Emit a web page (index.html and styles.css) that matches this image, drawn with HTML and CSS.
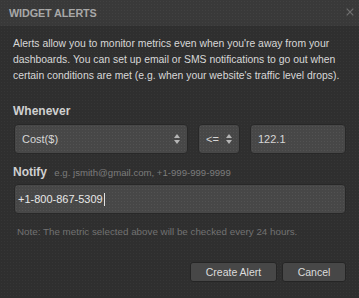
FILE: index.html
```html
<!DOCTYPE html>
<html>
<head>
<meta charset="utf-8">
<link rel="stylesheet" href="styles.css">
</head>
<body>
<div class="dialog">
  <div class="header">
    <span class="title">WIDGET ALERTS</span>
    <span class="close">
      <svg width="8" height="8" viewBox="0 0 8 8"><path d="M0.7 0.7L7.3 7.3M7.3 0.7L0.7 7.3" stroke="#6f6f6f" stroke-width="1.2"/></svg>
    </span>
  </div>
  <div class="body">
    <p class="intro">Alerts allow you to monitor metrics even when you're away from your dashboards. You can set up email or SMS notifications to go out when certain conditions are met (e.g. when your website's traffic level drops).</p>
    <div class="label">Whenever</div>
    <div class="row">
      <div class="field select metric"><span>Cost($)</span><span class="arrows"><svg width="6" height="10" viewBox="0 0 6 10"><path d="M3 0L6 4H0Z M3 10L6 6H0Z" fill="#b5b5b5"/></svg></span></div>
      <div class="field select op"><span>&lt;=</span><span class="arrows"><svg width="6" height="10" viewBox="0 0 6 10"><path d="M3 0L6 4H0Z M3 10L6 6H0Z" fill="#b5b5b5"/></svg></span></div>
      <div class="field value">122.1</div>
    </div>
    <div class="label notify">Notify <span class="hint">e.g. jsmith@gmail.com, +1-999-999-9999</span></div>
    <div class="field phone">+1-800-867-5309<span class="caret"></span></div>
    <div class="note">Note: The metric selected above will be checked every 24 hours.</div>
    <div class="actions">
      <button class="btn create">Create Alert</button>
      <button class="btn cancel">Cancel</button>
    </div>
  </div>
</div>
</body>
</html>
```
FILE: styles.css
```css
html, body {
  margin: 0;
  padding: 0;
  background: #2f2f2f;
}
body {
  font-family: "Liberation Sans", Arial, sans-serif;
  width: 359px;
  height: 298px;
  overflow: hidden;
}
.dialog {
  width: 359px;
  height: 298px;
  background-color: #2f2f2f;
  background-image: radial-gradient(circle, rgba(255,255,255,0.035) 0.6px, transparent 0.9px);
  background-size: 3px 3px;
}
.header {
  height: 26px;
  background-color: #393939;
  background-image: radial-gradient(circle, rgba(255,255,255,0.04) 0.6px, transparent 0.9px);
  background-size: 3px 3px;
  display: flex;
  align-items: center;
  justify-content: space-between;
  padding: 0 5px 0 9px;
}
.title {
  color: #a8a8a8;
  font-weight: bold;
  font-size: 10.8px;
  letter-spacing: -0.1px;
}
.close {
  display: flex;
  align-items: center;
  margin-top: -3px;
}
.body {
  padding: 0 13px 0 14px;
}
.intro {
  margin: 10px 0 0 -1px;
  color: #d8d8d8;
  font-size: 10.4px;
  line-height: 16px;
}
.label {
  color: #d0d0d0;
  font-weight: bold;
  font-size: 12px;
  margin-top: 20px;
  height: 15px;
  margin-left: -1px;
}
.row {
  display: flex;
  gap: 10px;
  margin-top: 5px;
}
.field {
  box-sizing: border-box;
  height: 30px;
  border-radius: 4px;
  border: 1px solid #282828;
  background-color: #474747;
  background-image: radial-gradient(circle, rgba(255,255,255,0.06) 0.6px, transparent 0.9px);
  background-size: 3px 3px;
  color: #d6d6d6;
  font-size: 11px;
  display: flex;
  align-items: center;
  padding: 0 7px;
}
.select {
  justify-content: space-between;
}
.arrows {
  display: flex;
  align-items: center;
}
.metric { width: 174px; }
.op { width: 42px; }
.value { flex: 1; }
.notify {
  margin-top: 11px;
}
.hint {
  font-weight: normal;
  color: #7c7c7c;
  font-size: 9.6px;
  margin-left: 4px;
}
.phone {
  margin-top: 4px;
  color: #e8e8e8;
  padding-left: 3px;
}
.caret {
  display: inline-block;
  width: 1px;
  height: 13px;
  background: #e0e0e0;
  margin-left: 1px;
}
.note {
  margin-top: 12px;
  color: #727272;
  font-size: 9.8px;
  margin-left: 3px;
}
.actions {
  display: flex;
  justify-content: flex-end;
  gap: 5px;
  margin-top: 25px;
}
.btn {
  box-sizing: border-box;
  height: 20px;
  border-radius: 3px;
  border: 1px solid #252525;
  background: #474747;
  color: #dcdcdc;
  font-family: "Liberation Sans", Arial, sans-serif;
  font-size: 10.5px;
  padding: 0;
}
.create { width: 87px; }
.cancel { width: 64px; }
```
